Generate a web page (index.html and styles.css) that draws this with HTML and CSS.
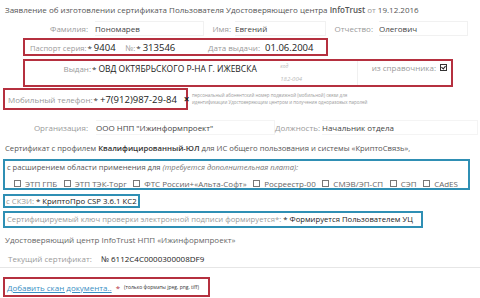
FILE: index.html
```html
<!doctype html>
<html>
<head>
<meta charset="UTF-8">
<title>Заявление на сертификат</title>
<link rel="stylesheet" href="styles.css">
</head>
<body>
<div class="page">
	<div class="title">Заявление об изготовлении сертификата Пользователя Удостоверяющего центра <b>InfoTrust</b> <span class="lbl">от</span> 19.12.2016</div>

	<div class="row names">
		<span class="lbl l-fam">Фамилия:</span><span class="fld f-fam">Пономарев</span>
		<span class="lbl l-name">Имя:</span><span class="fld f-name">Евгений</span>
		<span class="lbl l-otch">Отчество:</span><span class="fld f-otch">Олегович</span>
	</div>

	<div class="box red passport">
		<div class="seg s-ser"><span class="lbl l-ser">Паспорт серия:</span><span class="req">*</span><span class="val">9404</span></div>
		<div class="seg s-num"><span class="lbl">№:</span><span class="req">*</span><span class="val">313546</span></div>
		<div class="seg"><span class="lbl l-date">Дата выдачи:</span><span class="val">01.06.2004</span></div>
	</div>

	<div class="box red issued">
		<div class="iss-main">
			<span class="lbl l-iss">Выдан:</span><span class="req">*</span><span class="val v-iss">ОВД ОКТЯБРЬСКОГО Р-НА Г. ИЖЕВСКА</span>
		</div>
		<div class="code">
			<span class="code-lbl">код</span>
			<span class="code-val">182-004</span>
		</div>
		<div class="dict">
			<span class="lbl">из справочника:</span><span class="chk on"></span>
		</div>
	</div>

	<div class="phone-row">
		<div class="box red phone">
			<span class="lbl">Мобильный телефон:</span><span class="req">*</span><span class="val v-phone">+7(912)987-29-84</span><span class="caret"></span><span class="clear">×</span>
		</div>
		<div class="hint">
			<div>персональный абонентский номер подвижной (мобильной) связи для</div>
			<div>идентификации Удостоверяющим центром и получения одноразовых паролей</div>
		</div>
	</div>

	<div class="row org">
		<span class="lbl l-org">Организация:</span><span class="fld f-org">ООО НПП "Ижинформпроект"</span>
		<span class="lbl l-pos">Должность:</span><span class="fld f-pos">Начальник отдела</span>
	</div>

	<div class="line cert">Сертификат с профилем <b>Квалифицированный-ЮЛ</b> для ИС общего пользования и системы «КриптоСвязь»,</div>

	<div class="box blue ext">
		<div class="ext-head">с расширением области применения для <i>(требуется дополнительная плата):</i></div>
		<div class="opts">
			<span class="opt"><span class="chk"></span>ЭТП ГПБ</span>
			<span class="opt"><span class="chk"></span>ЭТП ТЭК-Торг</span>
			<span class="opt"><span class="chk"></span>ФТС России+«Альта-Софт»</span>
			<span class="opt"><span class="chk"></span>Росреестр-00</span>
			<span class="opt"><span class="chk"></span>СМЭВ/ЭП-СП</span>
			<span class="opt"><span class="chk"></span>СЭП</span>
			<span class="opt"><span class="chk"></span>CAdES</span>
		</div>
	</div>

	<div class="box blue skzi">
		<span class="lbl">с СКЗИ:</span> <span class="val2">* КриптоПро CSP 3.6.1 КС2</span>
	</div>

	<div class="box blue keygen">
		<span class="lbl">Сертифицируемый ключ проверки электронной подписи формируется*:</span> <span class="val2">* Формируется Пользователем УЦ</span>
	</div>

	<div class="line ca">Удостоверяющий центр InfoTrust НПП «Ижинформпроект»</div>

	<div class="line current">
		<span class="lbl l-cur">Текущий сертификат:</span><span class="val2">№ 6112C4C0000300008DF9</span>
	</div>

	<div class="box red scan">
		<a href="#" class="add">Добавить скан документа..</a><span class="req">*</span><span class="small">(только форматы jpeg, png, tiff)</span>
	</div>
</div>
</body>
</html>
```

FILE: styles.css
```css
body{margin:0;background:#fff}
.page{
	font-family:"Open Sans","Liberation Sans",sans-serif;
	font-size:8px;
	color:#444;
	width:480px;
	height:298px;
	overflow:hidden;
}
.lbl{color:#9a9a9a}
.req{color:#333;margin:0 2px 0 1px}
.val{color:#222;font-size:9.5px}
.val2{color:#222}

.title{height:20px;line-height:20px;padding-left:5px;color:#555;white-space:nowrap}
.title b{font-weight:600}

.row{display:flex;align-items:center;white-space:nowrap}
.names{height:16px}
.l-fam{width:88px;text-align:right;margin-right:7px}
.fld{color:#444;border:1px solid #f1f1f1;border-left:none;padding:1px 0}
.f-fam{width:108px}
.l-name{width:27px;text-align:right;margin-right:4px}
.f-name{width:90px}
.l-otch{width:47px;text-align:right;margin-right:6px}
.f-otch{width:88px}

.box{box-sizing:border-box;border:2px solid;white-space:nowrap}
.red{border-color:#b5303f}
.blue{border-color:#2f8fb4}

.passport{margin:2px 0 0 23px;width:305px;height:18px;display:flex;align-items:center;padding-left:4px}
.seg{display:flex;align-items:baseline;flex-shrink:0}
.s-ser{width:96px}
.s-num{width:83px}
.l-ser{margin-left:1px;font-size:7.6px}
.l-date{margin-right:5px}

.issued{margin:3px 0 0 23px;width:430px;height:28px;display:flex;align-items:flex-start}
.iss-main{width:238px;display:flex;align-items:center;padding-top:2px;height:11px}
.l-iss{width:66px;text-align:right}
.v-iss{font-size:8.5px}
.code{width:101px;height:24px;border-right:1px solid #f0f0f0;padding-left:22px;box-sizing:border-box;display:flex;flex-direction:column;font-style:italic;color:#b8b8b8}
.code-lbl{font-size:5px;margin-top:2px}
.code-val{font-size:6px;margin-top:6px}
.dict{display:flex;align-items:center;padding:1px 0 0 14px}

.chk{display:inline-block;box-sizing:border-box;width:7px;height:7px;border:1px solid #777;background:#fff;margin-right:4px;position:relative}
.dict .chk{margin-left:4px;border-color:#333}
.chk.on::after{content:"";position:absolute;left:1px;top:0;width:2px;height:3px;border:solid #222;border-width:0 1px 1px 0;transform:rotate(40deg)}

.phone-row{display:flex;align-items:center;margin-top:1px;height:22px}
.phone{margin-left:3px;width:185px;height:22px;display:flex;align-items:center;padding-left:3px}
.v-phone{font-size:9.5px}
.caret{width:1px;height:11px;background:#222;margin-left:1px}
.clear{color:#222;font-size:10px;font-weight:700;margin-left:6px}
.hint{font-size:4.5px;line-height:7px;color:#999;margin-left:4px}

.org{height:18px;margin-top:8px}
.l-org{width:88px;text-align:right;margin-right:8px}
.f-org{width:178px;border-color:#f4f4f4}
.l-pos{width:42px;text-align:right;margin-right:5px}
.f-pos{width:155px;border-color:#f4f4f4}

.line{height:16px;line-height:16px;padding-left:5px;white-space:nowrap}
.cert{margin-top:4px;color:#555;font-size:7.7px}
.cert b{font-weight:600;color:#333}

.ext{margin:3px 0 0 3px;width:467px;height:31px;padding:1px 0 0 2px}
.ext-head{color:#555;line-height:10px;font-size:7.6px}
.ext-head i{font-style:italic;color:#777}
.opts{display:flex;justify-content:space-between;padding:6px 10px 0 7px;color:#666}
.opt{display:flex;align-items:center}

.skzi{margin:4px 0 0 3px;width:137px;height:14px;line-height:10px;padding-left:1px;font-size:7.8px}
.keygen{margin:3px 0 0 3px;width:420px;height:17px;line-height:13px;padding-left:2px;font-size:7.7px}

.ca{margin-top:4px;color:#666}
.current{margin-top:3px;padding-left:8px;border-bottom:1px solid #e6e6e6;color:#444}
.l-cur{margin-right:9px}

.scan{margin:9px 0 0 3px;width:207px;height:20px;display:flex;align-items:center;padding-left:2px}
.add{color:#3b8fc4;text-decoration:underline}
.scan .req{margin:0 4px 0 4px;color:#b5303f}
.small{font-size:5px;color:#333}
```
